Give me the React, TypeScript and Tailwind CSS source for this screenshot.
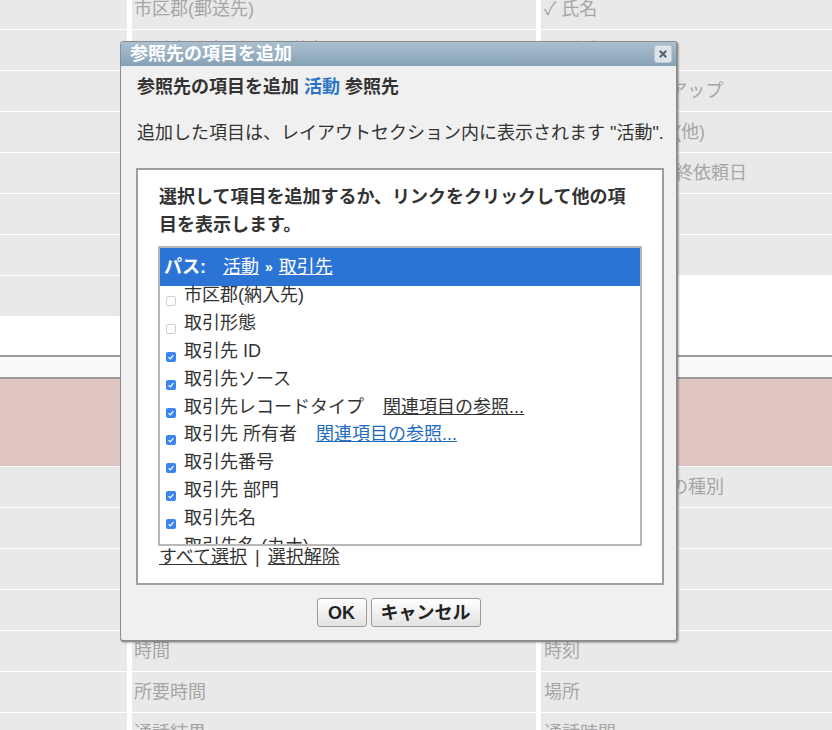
import React from 'react';

const font = "font-['Liberation_Sans','Noto_Sans_CJK_JP',sans-serif]";

type CellProps = { text?: string; right?: boolean };

const Cell: React.FC<CellProps> = ({ text, right }) => (
    <div
        className={`h-[40px] shrink-0 bg-[#e9e9e9] flex items-center whitespace-nowrap overflow-hidden text-[18px] text-[#a6a6a6] ${
            right ? 'pl-[3px]' : 'pl-[2px]'
        }`}
    >
        {text}
    </div>
);

const CheckBox: React.FC<{ checked: boolean }> = ({ checked }) =>
    checked ? (
        <span className="mt-[11px] w-[10px] h-[10px] shrink-0 rounded-[2px] bg-[#3a84ef] flex items-center justify-center">
            <svg viewBox="0 0 10 10" className="w-[8px] h-[8px]">
                <path d="M2 5.3 L4.2 7.4 L8 2.7" stroke="white" strokeWidth="1.5" fill="none" />
            </svg>
        </span>
    ) : (
        <span className="mt-[11px] w-[10px] h-[10px] shrink-0 rounded-[2px] border border-[#cfcfcf] bg-white" />
    );

const items = [
    { label: '市区郡(納入先)', checked: false },
    { label: '取引形態', checked: false },
    { label: '取引先 ID', checked: true },
    { label: '取引先ソース', checked: true },
    { label: '取引先レコードタイプ', checked: true, link: 'gray' },
    { label: '取引先 所有者', checked: true, link: 'blue' },
    { label: '取引先番号', checked: true },
    { label: '取引先 部門', checked: true },
    { label: '取引先名', checked: true },
    { label: '取引先名 (カナ)', checked: true },
];

const App: React.FC = () => {
    const leftTop = ['', '', '', '', '', '', '', ''];
    const midTop = ['市区郡(郵送先)', '取引先 郵便番号(郵送先)', '取引先 電話', '取引先 FAX', '取引先 業種', '取引先 従業員数', '取引先 評価', '取引先 年間売上'];
    const rightTop = ['✓ 氏名', '電話番号', '活動のフォローアップ', '取引先電話番号 (他)', '取引先責任者 最終依頼日', '部署', '役職'];
    const midBottom = ['件名', '期日', '状況', '優先度', '時間', '所要時間', '通話結果'];
    const rightBottom = ['関連する取引先の種別', '名前', '関連先', '説明', '時刻', '場所', '通話時間'];

    return (
        <div className={`relative w-[832px] h-[730px] overflow-hidden bg-white ${font}`}>
            {/* background layout */}
            <div className="flex gap-[5px] h-[366px] -mt-[11px] bg-white">
                <div className="w-[127px] flex flex-col gap-px">
                    {leftTop.map((t, i) => (
                        <Cell key={i} text={t} />
                    ))}
                </div>
                <div className="w-[404px] flex flex-col gap-px">
                    {midTop.map((t, i) => (
                        <Cell key={i} text={t} />
                    ))}
                </div>
                <div className="flex-1 flex flex-col gap-px">
                    {rightTop.map((t, i) => (
                        <Cell key={i} text={t} right />
                    ))}
                </div>
            </div>
            <div className="h-[2px] bg-[#9a9a9a]" />
            <div className="h-[20px] bg-[#fafafa]" />
            <div className="h-[2px] bg-[#9a9a9a]" />
            <div className="h-[87px] bg-[#dfc6c2]" />
            <div className="flex gap-[5px] pt-px bg-white">
                <div className="w-[127px] flex flex-col gap-px">
                    {midBottom.map((_, i) => (
                        <Cell key={i} />
                    ))}
                </div>
                <div className="w-[404px] flex flex-col gap-px">
                    {midBottom.map((t, i) => (
                        <Cell key={i} text={t} />
                    ))}
                </div>
                <div className="flex-1 flex flex-col gap-px">
                    {rightBottom.map((t, i) => (
                        <Cell key={i} text={t} right />
                    ))}
                </div>
            </div>

            {/* dialog */}
            <div className="absolute left-[120px] top-[41px] w-[558px] h-[601px] flex flex-col bg-[#f0f0f0] border border-[#8c8c8c] border-r-2 border-b-2 rounded-[4px] shadow-[1px_1px_2px_rgba(0,0,0,0.25)] overflow-hidden text-[#333]">
                <div className="h-[24px] shrink-0 flex items-center justify-between pl-[9px] pr-[4px] bg-linear-to-b from-[#aac0d1] to-[#86a1b5]">
                    <span className="text-white font-bold text-[18px] leading-[24px]">参照先の項目を追加</span>
                    <div className="w-[18px] h-[18px] rounded-[3px] bg-[#dde4ea] border border-[#bfcbd4] flex items-center justify-center">
                        <svg viewBox="0 0 10 10" className="w-[10px] h-[10px]">
                            <path d="M1.8 1.8 L8.2 8.2 M8.2 1.8 L1.8 8.2" stroke="#606060" strokeWidth="2" />
                        </svg>
                    </div>
                </div>

                <div className="pl-[15px] pr-[12px] pt-[7px]">
                    <div className="pl-px font-bold text-[18px] leading-[28px]">
                        参照先の項目を追加 <span className="text-[#2b74c8]">活動</span> 参照先
                    </div>
                    <div className="pl-px mt-[18px] text-[18px] leading-[28px]">
                        追加した項目は、レイアウトセクション内に表示されます "活動".
                    </div>

                    <div className="mt-[21px] w-[528px] h-[417px] border-2 border-[#9e9e9e] bg-white pt-[13px] px-[20px]">
                        <div className="pl-px font-bold text-[18px] leading-[28px]">
                            選択して項目を追加するか、リンクをクリックして他の項目を表示します。
                        </div>

                        <div className="mt-[7px] w-[484px] h-[300px] border-2 border-[#b8b8b8] overflow-hidden bg-white">
                            <div className="h-[38px] flex items-center pl-[4px] bg-[#2b74d6] text-white text-[18px]">
                                <span className="font-bold">パス:</span>
                                <span className="ml-[17px] underline">活動</span>
                                <span className="mx-[6px] font-bold text-[14px]">»</span>
                                <span className="underline">取引先</span>
                            </div>
                            <div className="-mt-[4px]">
                                {items.map((item) => (
                                    <div key={item.label} className="h-[27.8px] flex items-center pl-[6px] text-[18px] whitespace-nowrap">
                                        <CheckBox checked={item.checked} />
                                        <span className="ml-[8px]">{item.label}</span>
                                        {item.link === 'gray' && (
                                            <span className="ml-[19px] underline text-[#333]">関連項目の参照...</span>
                                        )}
                                        {item.link === 'blue' && (
                                            <span className="ml-[19px] underline text-[#1f6bbf]">関連項目の参照...</span>
                                        )}
                                    </div>
                                ))}
                            </div>
                        </div>

                        <div className="pl-px text-[18px] leading-[22px]">
                            <span className="underline">すべて選択</span>
                            <span className="mx-[8px]">|</span>
                            <span className="underline">選択解除</span>
                        </div>
                    </div>
                </div>

                <div className="mt-[13px] flex justify-center gap-[4px]">
                    <button className="w-[50px] h-[29px] border border-[#9a9a9a] rounded-[3px] bg-linear-to-b from-white to-[#e2e2e2] font-bold text-[18px] leading-none text-[#222]">
                        OK
                    </button>
                    <button className="w-[110px] h-[29px] border border-[#9a9a9a] rounded-[3px] bg-linear-to-b from-white to-[#e2e2e2] font-bold text-[18px] leading-none text-[#222]">
                        キャンセル
                    </button>
                </div>
            </div>
        </div>
    );
};

export default App;
